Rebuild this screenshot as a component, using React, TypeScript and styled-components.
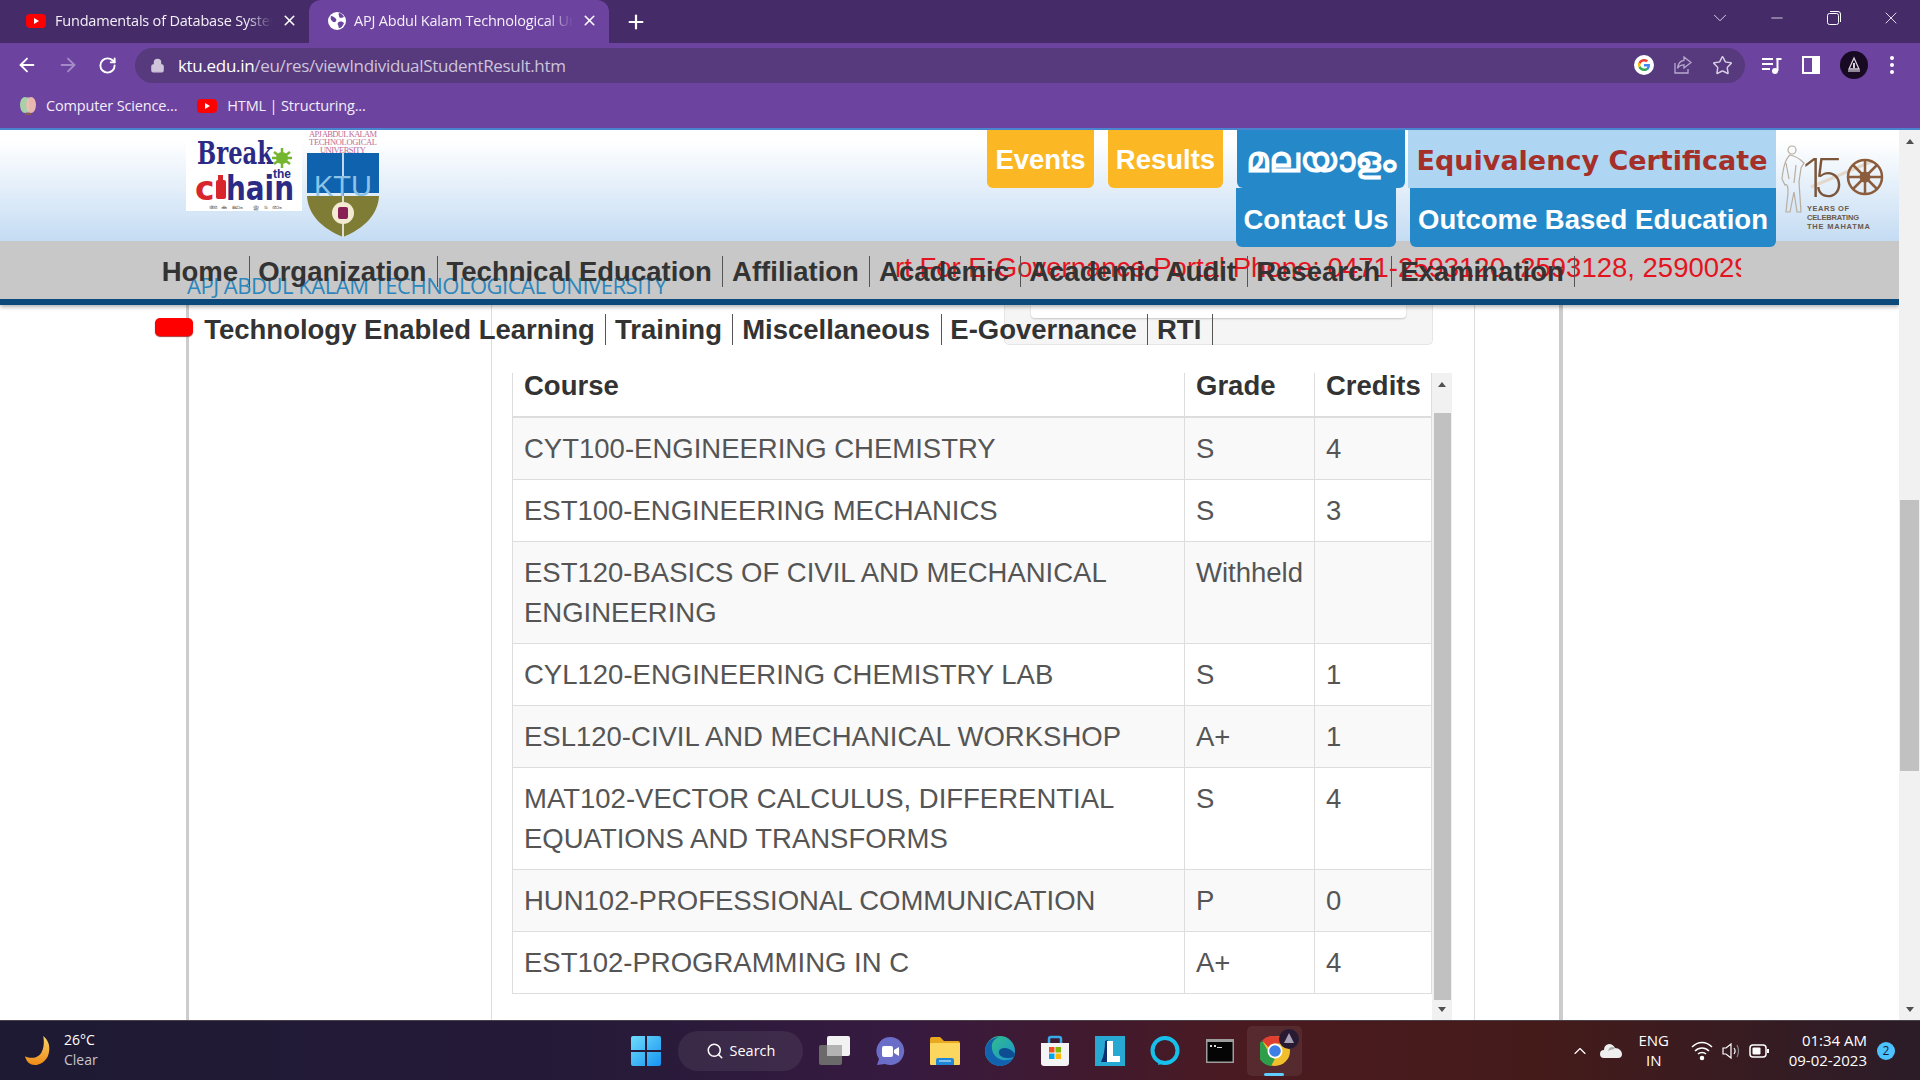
import React from 'react';
import styled, { createGlobalStyle } from 'styled-components';
import { ArrowLeft, ArrowRight, RotateCw, Lock, X, Plus, Star, ChevronDown, ChevronUp, Minus, Search } from 'lucide-react';

const GlobalStyle = createGlobalStyle`
    html, body { margin: 0; padding: 0; overflow: hidden; background: #fff; }
    * { box-sizing: border-box; }
`;

const ui = `"Open Sans", "Noto Sans", sans-serif`;
const web = `"Liberation Sans", Arial, sans-serif`;

const firstNavRow = ['Home', 'Organization', 'Technical Education', 'Affiliation', 'Academic', 'Academic Audit', 'Research', 'Examination'];
const secondNavRow = ['Technology Enabled Learning', 'Training', 'Miscellaneous', 'E-Governance', 'RTI'];

const results = [
    { course: 'CYT100-ENGINEERING CHEMISTRY', grade: 'S', credits: '4' },
    { course: 'EST100-ENGINEERING MECHANICS', grade: 'S', credits: '3' },
    { course: 'EST120-BASICS OF CIVIL AND MECHANICAL ENGINEERING', grade: 'Withheld', credits: '' },
    { course: 'CYL120-ENGINEERING CHEMISTRY LAB', grade: 'S', credits: '1' },
    { course: 'ESL120-CIVIL AND MECHANICAL WORKSHOP', grade: 'A+', credits: '1' },
    { course: 'MAT102-VECTOR CALCULUS, DIFFERENTIAL EQUATIONS AND TRANSFORMS', grade: 'S', credits: '4' },
    { course: 'HUN102-PROFESSIONAL COMMUNICATION', grade: 'P', credits: '0' },
    { course: 'EST102-PROGRAMMING IN C', grade: 'A+', credits: '4' },
];

const YoutubeIcon = () => (
    <svg width="20" height="20" viewBox="0 0 20 20">
        <rect x="0" y="3" width="20" height="14" rx="4" fill="#f00" />
        <path d="M8 7l5 3-5 3z" fill="#fff" />
    </svg>
);

const GlobeIcon = () => (
    <svg width="18" height="18" viewBox="0 0 18 18">
        <circle cx="9" cy="9" r="9" fill="#fff" />
        <path d="M3 4c2 0 3 1 4 2s2 1 1 3-3 1-4 0-2-3-1-5zM11 1c2 0 4 2 5 4l-3 1c-1 0-2-1-2-2s-1-2 0-3zM11 10c2-1 4 0 5 1-1 3-3 5-5 5-1-1 0-2-1-3s0-3 1-3z" fill="#6d43a0" />
    </svg>
);

const GoogleIcon = () => (
    <svg width="20" height="20" viewBox="0 0 20 20">
        <circle cx="10" cy="10" r="10" fill="#fff" />
        <path d="M16 10.2c0-.5 0-.9-.1-1.3H10v2.5h3.4c-.2.8-.6 1.400-1.300 1.900l2 1.500c1.200-1.100 1.900-2.700 1.900-4.600z" fill="#4285f4" />
        <path d="M10 16c1.700 0 3-.5 4.100-1.600l-2-1.500c-.5.400-1.200.600-2.100.600-1.600 0-3-1.100-3.500-2.500l-2 1.600C5.500 14.600 7.600 16 10 16z" fill="#34a853" />
        <path d="M6.500 11c-.3-.7-.3-1.400 0-2.100L4.500 7.300c-.8 1.700-.8 3.600 0 5.300z" fill="#fbbc05" />
        <path d="M10 6.400c.9 0 1.700.3 2.300.9l1.800-1.800C13 4.500 11.600 4 10 4 7.600 4 5.500 5.400 4.500 7.300l2 1.600C7 7.500 8.400 6.400 10 6.400z" fill="#ea4335" />
    </svg>
);

const ShareIcon = () => (
    <svg width="20" height="20" viewBox="0 0 20 20" fill="none" stroke="#b9a9cf" strokeWidth="1.300">
        <path d="M2 8v10h13v-4" />
        <path d="M11 2l7 5.500-7 5.500v-3.200c-3 0-5 1-6.500 3.500C5 9 7.500 5.800 11 5.300z" />
    </svg>
);

const MediaIcon = () => (
    <svg width="20" height="20" viewBox="0 0 20 20" fill="#fff">
        <rect x="0" y="3" width="11" height="2" />
        <rect x="0" y="8" width="11" height="2" />
        <rect x="0" y="13" width="8" height="2" />
        <circle cx="13" cy="16" r="3" />
        <rect x="14.500" y="3" width="2" height="13" />
        <rect x="14.500" y="3" width="5" height="2" />
    </svg>
);

const SidePanelIcon = () => (
    <svg width="18" height="18" viewBox="0 0 18 18">
        <path d="M0 0h18v18H0z" fill="#fff" />
        <path d="M2 2h8v14H2z" fill="#6d43a0" />
    </svg>
);

const ProfileIcon = () => (
    <svg width="28" height="28" viewBox="0 0 28 28">
        <circle cx="14" cy="14" r="14" fill="#170a22" />
        <path d="M14 7l5 11H9z" fill="none" stroke="#d8d3de" strokeWidth="1.300" />
        <path d="M13 12h2v5h-2z" fill="#d8d3de" />
        <path d="M8 20h12" stroke="#b8b0c0" strokeWidth="1.500" />
    </svg>
);

const BrainIcon = () => (
    <svg width="16" height="20" viewBox="0 0 16 20">
        <ellipse cx="5" cy="9" rx="5" ry="8" fill="#a7d2a8" />
        <ellipse cx="11" cy="9" rx="5" ry="8" fill="#eab7b0" />
        <path d="M8 1v16" stroke="#d8d2b8" />
        <path d="M5 18h6" stroke="#8a5a52" strokeWidth="2" />
    </svg>
);

const BreakTheChainLogo = () => (
    <svg width="116" height="81" viewBox="0 0 116 81">
        <rect width="116" height="81" fill="#fff" />
        <text x="11" y="34" fontFamily="DejaVu Serif Condensed, DejaVu Sans Condensed, serif" fontWeight="700" fontSize="31" fill="#2b2b85" textLength="76" lengthAdjust="spacingAndGlyphs">Break</text>
        <g fill="#74b62e">
            <circle cx="96" cy="28" r="6" />
            <path d="M88 22l16 12M104 22L88 34M96 18v20M86 28h20" stroke="#74b62e" strokeWidth="2.500" />
        </g>
        <text x="87" y="48" fontFamily="Liberation Sans, sans-serif" fontWeight="700" fontSize="12" fill="#2b2b85">the</text>
        <text x="9" y="70" fontFamily="DejaVu Sans, sans-serif" fontWeight="700" fontSize="33" fill="#d9262c">c</text>
        <rect x="30" y="50" width="10" height="19" rx="2" fill="#d9262c" />
        <rect x="32" y="45" width="5" height="6" fill="#d9262c" />
        <text x="40" y="70" fontFamily="DejaVu Sans Condensed, sans-serif" fontWeight="700" fontSize="33" fill="#2b2b85" textLength="68" lengthAdjust="spacingAndGlyphs">hain</text>
        <text x="23" y="79" fontFamily="Liberation Sans, sans-serif" fontSize="6" fill="#555" textLength="73">അകലാം തുടരാം</text>
    </svg>
);

const KtuLogo = () => (
    <svg width="72" height="108" viewBox="0 0 72 108">
        <g fontFamily="Liberation Serif, serif" fontSize="8.500" fill="#c36c95" textAnchor="middle">
            <text x="36" y="7" textLength="68">APJ ABDUL KALAM</text>
            <text x="36" y="15" textLength="68">TECHNOLOGICAL</text>
            <text x="36" y="23" textLength="46">UNIVERSITY</text>
        </g>
        <rect x="0" y="23" width="72" height="40" fill="#0f62ad" />
        <path d="M0 66h72c-1 18-14 32-36 41C14 98 1 84 0 66z" fill="#7f7c35" />
        <path d="M36 23v24M36 66v41" stroke="#fff" strokeWidth="1.500" />
        <path d="M36 47v19" stroke="#c0344e" strokeWidth="1.500" />
        <circle cx="36" cy="83" r="11" fill="#f3ead2" />
        <rect x="31" y="77" width="10" height="12" rx="2" fill="#8a1f56" />
        <text x="36" y="66" textAnchor="middle" fontFamily="Liberation Sans, sans-serif" fontSize="29" fill="#8cc3e6" textLength="58" lengthAdjust="spacingAndGlyphs">KTU</text>
    </svg>
);

const GandhiLogo = () => (
    <svg width="104" height="90" viewBox="0 0 104 90">
        <path d="M30 44L92 18" stroke="#e2d8cc" strokeWidth="3" />
        <g fill="none" stroke="#b9ada0" strokeWidth="1.200">
            <circle cx="11" cy="7" r="4" />
            <path d="M9 12C4 16 2 26 1 36l3 6c3-2 3 4 3 8L5 69h4l4-20 3 20h4l-2-30 2-14 3-5c-4-4-8-7-14-8z" />
            <path d="M5 20l3 16M15 22l-2 18" />
        </g>
        <text x="21" y="54" fontFamily="Inter, Lato, sans-serif" fontWeight="200" fontSize="54" fill="#7a553a" textLength="42">15</text>
        <g stroke="#8c5d3c" fill="none">
            <circle cx="84" cy="34" r="17" strokeWidth="2.500" />
            <circle cx="84" cy="34" r="4" strokeWidth="3" />
            <path d="M84 17v34M67 34h34M72 22l24 24M96 22L72 46" strokeWidth="2.500" />
        </g>
        <g fontFamily="Liberation Sans, sans-serif" fontWeight="700" fontSize="7.500" fill="#6b5a4b">
            <text x="26" y="68" textLength="42">YEARS OF</text>
            <text x="26" y="77" textLength="52">CELEBRATING</text>
            <text x="26" y="86" textLength="63">THE MAHATMA</text>
        </g>
    </svg>
);

const MoonIcon = () => (
    <svg width="32" height="32" viewBox="0 0 30 30">
        <defs>
            <linearGradient id="moon" x1="0" y1="0" x2="0" y2="1">
                <stop offset="0" stopColor="#f7d66a" />
                <stop offset="1" stopColor="#ef8a17" />
            </linearGradient>
        </defs>
        <path d="M18 1c5 4 7 10 5 17-2 7-9 11-15 10-4-1-6-4-7-8 6 3 12 1 15-3 3-5 3-11 2-16z" fill="url(#moon)" />
    </svg>
);

const WindowsIcon = () => (
    <svg width="30" height="30" viewBox="0 0 30 30">
        <defs>
            <linearGradient id="win" x1="0" y1="0" x2="1" y2="1">
                <stop offset="0" stopColor="#6fdcfb" />
                <stop offset="1" stopColor="#1593f2" />
            </linearGradient>
        </defs>
        <path d="M0 2a2 2 0 0 1 2-2h12v14H0zM16 0h12a2 2 0 0 1 2 2v12H16zM0 16h14v14H2a2 2 0 0 1-2-2zM16 16h14v12a2 2 0 0 1-2 2H16z" fill="url(#win)" />
    </svg>
);

const TaskViewIcon = () => (
    <svg width="32" height="30" viewBox="0 0 32 30">
        <rect x="0" y="9" width="23" height="20" rx="2" fill="#6a6a6a" />
        <rect x="8" y="0" width="23" height="20" rx="2" fill="#f2f2f2" />
        <rect x="8" y="9" width="15" height="11" fill="#b3b3b3" />
    </svg>
);

const MeetIcon = () => (
    <svg width="30" height="30" viewBox="0 0 30 30">
        <path d="M15 1a14 14 0 1 1-5 27l-8 1 2-6A14 14 0 0 1 15 1z" fill="#6a6ec9" />
        <rect x="7" y="10" width="11" height="11" rx="2" fill="#fff" />
        <path d="M19 14l5-3v9l-5-3z" fill="#fff" />
    </svg>
);

const ExplorerIcon = () => (
    <svg width="30" height="28" viewBox="0 0 30 28">
        <path d="M0 2a2 2 0 0 1 2-2h8l4 4h14a2 2 0 0 1 2 2v4H0z" fill="#e8a91e" />
        <rect x="0" y="6" width="30" height="22" rx="1" fill="#fcd75f" />
        <path d="M6 28v-5a2 2 0 0 1 2-2h14a2 2 0 0 1 2 2v5z" fill="#1f86d8" />
        <rect x="9" y="23" width="12" height="2" fill="#7ec2f2" />
    </svg>
);

const EdgeIcon = () => (
    <svg width="30" height="30" viewBox="0 0 30 30">
        <defs>
            <linearGradient id="edge" x1="0" y1="0" x2="1" y2="1">
                <stop offset="0" stopColor="#33c481" />
                <stop offset="1" stopColor="#1a8fd8" />
            </linearGradient>
        </defs>
        <circle cx="15" cy="15" r="15" fill="url(#edge)" />
        <path d="M0 15C0 7 7 1 15 1c-6 1-9 6-8 12 1 7 7 12 15 11 3 0 5-1 6-2-3 5-8 8-13 8C7 30 0 23 0 15z" fill="#1362b0" />
        <path d="M14 15c1-3 6-4 10-2s6 4 6 7c-3 2-5 2-8 2-5 0-9-3-8-7z" fill="#0d4d92" />
    </svg>
);

const StoreIcon = () => (
    <svg width="30" height="32" viewBox="0 0 30 32">
        <path d="M9 8V4a2 2 0 0 1 2-2h8a2 2 0 0 1 2 2v4" fill="none" stroke="#38a9e8" strokeWidth="2.500" />
        <path d="M1 8h28v20a3 3 0 0 1-3 3H4a3 3 0 0 1-3-3z" fill="#f4f4f4" />
        <rect x="9" y="12" width="5.500" height="5.500" fill="#f25022" />
        <rect x="15.500" y="12" width="5.500" height="5.500" fill="#7fba00" />
        <rect x="9" y="18.500" width="5.500" height="5.500" fill="#00a4ef" />
        <rect x="15.500" y="18.500" width="5.500" height="5.500" fill="#ffb900" />
    </svg>
);

const LauncherIcon = () => (
    <svg width="30" height="30" viewBox="0 0 30 30">
        <rect width="30" height="30" fill="#27a9d3" />
        <path d="M6 26c3-6 4-14 4-21l3-1v22z" fill="#0d2f70" />
        <path d="M12 5h6v15h7v6H12z" fill="#fff" />
    </svg>
);

const AlexaIcon = () => (
    <svg width="30" height="30" viewBox="0 0 30 30">
        <circle cx="15" cy="14.500" r="12.500" fill="none" stroke="#17c0ea" strokeWidth="4" />
        <path d="M9 24l-1 5 7-2z" fill="#17c0ea" />
    </svg>
);

const TerminalIcon = () => (
    <svg width="28" height="24" viewBox="0 0 28 24">
        <rect width="28" height="24" fill="#9d9d9d" />
        <rect x="1.500" y="3" width="25" height="19.500" fill="#050505" />
        <path d="M4 6h2v2H4zM8 6h2v2H8zM11 8h5v1h-5z" fill="#ddd" />
    </svg>
);

const ChromeIcon = () => (
    <svg width="30" height="30" viewBox="0 0 30 30">
        <circle cx="15" cy="15" r="15" fill="#f1bf2c" />
        <path d="M15 0a15 15 0 0 1 13 7.500H15a7.500 7.500 0 0 0-6.500 3.800L2 4.500A15 15 0 0 1 15 0z" fill="#e0402f" />
        <path d="M2 4.500l6.500 11.300a7.500 7.500 0 0 0 6.500 7L11 30A15 15 0 0 1 2 4.500z" fill="#2f9e4a" />
        <circle cx="15" cy="15" r="7.500" fill="#fff" />
        <circle cx="15" cy="15" r="5.800" fill="#3d7fe4" />
    </svg>
);

const ChromeBadge = () => (
    <svg width="20" height="20" viewBox="0 0 20 20">
        <circle cx="10" cy="10" r="10" fill="#281a33" />
        <path d="M10 4l5 10H5z" fill="#a79fb3" />
    </svg>
);

const CloudIcon = () => (
    <svg width="22" height="18" viewBox="0 0 22 18">
        <path d="M4 16a4 4 0 0 1 0-8 6 6 0 0 1 5-6c3 0 5 2 6 4 4 0 7 3 7 6a4 4 0 0 1-4 4z" fill="#eee" />
        <path d="M8 9c3-2 6-1 7-3-3-2-6-1-7 3z" fill="#aaa" />
    </svg>
);

const WifiIcon = () => (
    <svg width="22" height="20" viewBox="0 0 22 20" fill="none" stroke="#fff" strokeWidth="1.500">
        <path d="M1 6c6-6 14-6 20 0M4 10c4-4 10-4 14 0M7 13c2-2 6-2 8 0" />
        <circle cx="11" cy="17" r="1.500" fill="#fff" />
    </svg>
);

const SpeakerIcon = () => (
    <svg width="20" height="20" viewBox="0 0 20 20" fill="none" stroke="#fff" strokeWidth="1.200">
        <path d="M2 7h3l5-4v14l-5-4H2z" />
        <path d="M13 7c1.500 2 1.500 4 0 6" />
        <path d="M16 4c2 4 2 8 0 12" stroke="#888" />
    </svg>
);

const BatteryIcon = () => (
    <svg width="20" height="14" viewBox="0 0 20 14">
        <rect x="1" y="1" width="16" height="12" rx="3" fill="none" stroke="#fff" strokeWidth="1.500" />
        <rect x="3.500" y="3.500" width="8" height="7" rx="1" fill="#fff" />
        <rect x="18" y="5" width="2" height="4" fill="#fff" />
    </svg>
);

const App = () => (
    <Screen>
        <GlobalStyle />
        <TabStrip>
            <Tab>
                <TabIcon><YoutubeIcon /></TabIcon>
                <TabTitle>Fundamentals of Database Systems</TabTitle>
                <X size={17} color="#fff" strokeWidth={2.2} />
            </Tab>
            <Tab $active>
                <TabIcon><GlobeIcon /></TabIcon>
                <TabTitle>APJ Abdul Kalam Technological University</TabTitle>
                <X size={17} color="#fff" strokeWidth={2.2} />
            </Tab>
            <NewTab><Plus size={22} color="#fff" strokeWidth={2.4} /></NewTab>
            <WindowControls>
                <ChevronDown size={22} color="#e8e0f0" strokeWidth={1} />
                <Minus size={18} color="#fff" strokeWidth={1} />
                <svg width="16" height="16" viewBox="0 0 16 16" fill="none" stroke="#fff">
                    <rect x="1.500" y="3.500" width="11" height="11" rx="2" />
                    <path d="M4 1.500h8a2.500 2.500 0 0 1 2.500 2.500v8" />
                </svg>
                <X size={20} color="#fff" strokeWidth={1} />
            </WindowControls>
        </TabStrip>
        <Toolbar>
            <NavButtons>
                <ArrowLeft size={22} color="#fff" />
                <ArrowRight size={22} color="#a58bc6" />
                <RotateCw size={19} color="#fff" strokeWidth={2.4} />
            </NavButtons>
            <AddressBar>
                <Lock size={15} color="#cfc6dc" fill="#cfc6dc" />
                <Url><strong>ktu.edu.in</strong>/eu/res/viewIndividualStudentResult.htm</Url>
                <AddressIcons>
                    <GoogleIcon />
                    <ShareIcon />
                    <Star size={21} color="#d8cfe4" strokeWidth={1.7} />
                </AddressIcons>
            </AddressBar>
            <ToolbarIcons>
                <MediaIcon />
                <SidePanelIcon />
                <ProfileIcon />
                <Dots><i /><i /><i /></Dots>
            </ToolbarIcons>
        </Toolbar>
        <Bookmarks>
            <Bookmark><BrainIcon />Computer Science...</Bookmark>
            <Bookmark><YoutubeIcon />HTML | Structuring...</Bookmark>
        </Bookmarks>
        <Viewport>
            <Page>
                <Header>
                    <Logos>
                        <BreakTheChainLogo />
                        <KtuLogo />
                    </Logos>
                    <HeaderLinks>
                        <LinkRow>
                            <HeaderLink $tone="amber" $w={107}>Events</HeaderLink>
                            <HeaderLink $tone="amber" $w={115}>Results</HeaderLink>
                            <MalayalamLink $tone="blue" $w={168}>മലയാളം</MalayalamLink>
                            <EquivalencyLink>Equivalency Certificate</EquivalencyLink>
                        </LinkRow>
                        <LinkRow>
                            <HeaderLink $tone="blue" $w={160}>Contact Us</HeaderLink>
                            <HeaderLink $tone="blue" $w={366}>Outcome Based Education</HeaderLink>
                        </LinkRow>
                    </HeaderLinks>
                    <AnniversaryLogo><GandhiLogo /></AnniversaryLogo>
                </Header>
                <Nav>
                    <UniversityName>APJ ABDUL KALAM TECHNOLOGICAL UNIVERSITY</UniversityName>
                    <Marquee>rt For E-Governance Portal Phone: 0471-2593120, 2593128, 2590029</Marquee>
                    <NavRow>
                        {firstNavRow.map(item => <NavItem key={item}>{item}</NavItem>)}
                    </NavRow>
                    <NavRow $second>
                        <RedPill />
                        {secondNavRow.map(item => <NavItem key={item}>{item}</NavItem>)}
                    </NavRow>
                </Nav>
                <Card>
                    <Column>
                        <NoticePanel><NoticeBox /></NoticePanel>
                        <TableScroller>
                            <ResultTable>
                                <colgroup>
                                    <col style={{ width: 672 }} />
                                    <col style={{ width: 130 }} />
                                    <col style={{ width: 117 }} />
                                </colgroup>
                                <thead>
                                    <tr>
                                        <th>Course</th>
                                        <th>Grade</th>
                                        <th>Credits</th>
                                    </tr>
                                </thead>
                                <tbody>
                                    {results.map(row => (
                                        <tr key={row.course}>
                                            <td>{row.course}</td>
                                            <td>{row.grade}</td>
                                            <td>{row.credits}</td>
                                        </tr>
                                    ))}
                                </tbody>
                            </ResultTable>
                            <ScrollTrack $inner>
                                <ScrollArrow $up />
                                <ScrollThumb $top={40} $height={587} $inner />
                                <ScrollArrow />
                            </ScrollTrack>
                        </TableScroller>
                    </Column>
                </Card>
            </Page>
            <ScrollTrack>
                <ScrollArrow $up />
                <ScrollThumb $top={370} $height={271} />
                <ScrollArrow />
            </ScrollTrack>
        </Viewport>
        <Taskbar>
            <Weather>
                <MoonIcon />
                <WeatherText>
                    <span>26°C</span>
                    <small>Clear</small>
                </WeatherText>
            </Weather>
            <TaskCentre>
                <WindowsIcon />
                <SearchPill><Search size={18} color="#fff" />Search</SearchPill>
                <TaskIcons>
                    <TaskIcon><TaskViewIcon /></TaskIcon>
                    <TaskIcon><MeetIcon /></TaskIcon>
                    <TaskIcon><ExplorerIcon /></TaskIcon>
                    <TaskIcon><EdgeIcon /></TaskIcon>
                    <TaskIcon><StoreIcon /></TaskIcon>
                    <TaskIcon><LauncherIcon /></TaskIcon>
                    <TaskIcon><AlexaIcon /></TaskIcon>
                    <TaskIcon><TerminalIcon /></TaskIcon>
                    <TaskIcon $active>
                        <ChromeIcon />
                        <BadgeSlot><ChromeBadge /></BadgeSlot>
                    </TaskIcon>
                </TaskIcons>
            </TaskCentre>
            <Tray>
                <ChevronUp size={20} color="#fff" strokeWidth={1.4} />
                <CloudIcon />
                <TrayText><span>ENG</span><span>IN</span></TrayText>
                <TrayIcons>
                    <WifiIcon />
                    <SpeakerIcon />
                    <BatteryIcon />
                </TrayIcons>
                <Clock><span>01:34 AM</span><span>09-02-2023</span></Clock>
                <Badge>2</Badge>
            </Tray>
        </Taskbar>
    </Screen>
);

export default App;

const Screen = styled.div`
    width: 1920px;
    height: 1080px;
    display: flex;
    flex-direction: column;
    overflow: hidden;
    font-family: ${web};
`;

const TabStrip = styled.div`
    height: 43px;
    flex: none;
    display: flex;
    background: #452c69;
`;

const Tab = styled.div<{ $active?: boolean }>`
    width: ${p => (p.$active ? 300 : 309)}px;
    height: 43px;
    display: flex;
    align-items: center;
    gap: ${p => (p.$active ? 8 : 9)}px;
    padding: 0 11px 2px ${p => (p.$active ? 19 : 26)}px;
    border-radius: 12px 12px 0 0;
    background: ${p => (p.$active ? '#6d43a0' : 'transparent')};
`;

const TabIcon = styled.span`
    display: flex;
    flex: none;
`;

const TabTitle = styled.span`
    flex: 1;
    min-width: 0;
    overflow: hidden;
    white-space: nowrap;
    font: 14.5px ${ui};
    letter-spacing: -0.2px;
    color: #f4eff8;
    mask-image: linear-gradient(to right, #000 88%, transparent 100%);
`;

const NewTab = styled.div`
    margin-left: 16px;
    display: flex;
    align-items: center;
`;

const WindowControls = styled.div`
    margin-left: auto;
    width: 257px;
    display: grid;
    grid-template-columns: repeat(4, 57px);
    justify-items: center;
    align-items: center;
    padding: 0 0 7px 28px;
`;

const Toolbar = styled.div`
    height: 44px;
    flex: none;
    display: flex;
    align-items: center;
    background: #6d43a0;
`;

const NavButtons = styled.div`
    width: 135px;
    flex: none;
    display: flex;
    align-items: center;
    gap: 19px;
    padding-left: 16px;
`;

const AddressBar = styled.div`
    width: 1610px;
    height: 35px;
    flex: none;
    display: flex;
    align-items: center;
    padding: 0 0 0 15px;
    border-radius: 18px;
    background: #563a7d;
`;

const Url = styled.div`
    margin-left: 13px;
    font: 17px ${ui};
    letter-spacing: -0.32px;
    color: #cdc4da;

    strong {
        font-weight: 400;
        color: #fff;
    }
`;

const AddressIcons = styled.div`
    margin-left: auto;
    display: flex;
    align-items: center;
    gap: 19px;
    padding-right: 12px;
`;

const ToolbarIcons = styled.div`
    display: flex;
    align-items: center;
    padding-left: 17px;
    gap: 20px;
`;

const Dots = styled.div`
    display: flex;
    flex-direction: column;
    gap: 3px;
    margin-left: 2px;

    i {
        width: 4px;
        height: 4px;
        border-radius: 50%;
        background: #fff;
    }
`;

const Bookmarks = styled.div`
    height: 41px;
    flex: none;
    display: flex;
    align-items: center;
    gap: 20px;
    padding: 0 0 4px 20px;
    background: #6d43a0;
`;

const Bookmark = styled.div`
    display: flex;
    align-items: center;
    gap: 10px;
    font: 14.5px ${ui};
    letter-spacing: -0.15px;
    color: #f3eef8;
`;

const Viewport = styled.div`
    flex: 1;
    min-height: 0;
    display: flex;
    border-top: 2px solid #4a84cf;
`;

const Page = styled.div`
    flex: 1;
    min-width: 0;
    display: flex;
    flex-direction: column;
    overflow: hidden;
    background: #fff;
`;

const Header = styled.div`
    height: 111px;
    flex: none;
    display: flex;
    padding-left: 186px;
    background: linear-gradient(to bottom, #ffffff 10%, #c4dcf3 100%);
    position: relative;
    z-index: 2;
`;

const Logos = styled.div`
    display: flex;
    align-items: flex-start;
    gap: 5px;
`;

const HeaderLinks = styled.div`
    margin-left: auto;
    display: flex;
    flex-direction: column;
    align-items: flex-end;
`;

const LinkRow = styled.div`
    display: flex;
    gap: 14px;

    & + & a {
        height: 59px;
        padding-top: 4px;
    }
`;

const HeaderLink = styled.a<{ $tone: 'amber' | 'blue'; $w: number }>`
    width: ${p => p.$w}px;
    height: 58px;
    display: flex;
    align-items: center;
    justify-content: center;
    padding-top: 2px;
    border-radius: 0 0 6px 6px;
    background: ${p => (p.$tone === 'amber' ? '#fcb725' : '#2589c9')};
    font: 700 27.5px ${web};
    color: #fff;
`;

const MalayalamLink = styled(HeaderLink)`
    margin-right: -11px;
    font-size: 36px;
`;

const EquivalencyLink = styled.a`
    width: 368px;
    height: 58px;
    display: flex;
    align-items: center;
    justify-content: center;
    padding-top: 2px;
    background: #aed5f1;
    font: 700 27px "DejaVu Sans", sans-serif;
    color: #a5302a;
`;

const AnniversaryLogo = styled.div`
    width: 123px;
    flex: none;
    padding: 13px 0 0 5px;
`;

const Nav = styled.nav`
    height: 64px;
    flex: none;
    position: relative;
    z-index: 1;
    padding: 15px 0 0 152px;
    background: #c8c8c8;
    border-bottom: 6px solid #0d4a7c;
    box-shadow: 0 2px 4px rgba(0, 0, 0, 0.3);
`;

const UniversityName = styled.div`
    position: absolute;
    left: 187px;
    top: 29px;
    white-space: nowrap;
    font: 22px "Open Sans", sans-serif;
    letter-spacing: -0.48px;
    color: #2a86bd;
`;

const Marquee = styled.div`
    position: absolute;
    left: 895px;
    top: 11px;
    width: 846px;
    overflow: hidden;
    white-space: nowrap;
    font: 27.5px ${web};
    color: #e3141f;
`;

const NavRow = styled.div<{ $second?: boolean }>`
    position: relative;
    display: flex;
    align-items: center;
    height: 31px;
    margin: ${p => (p.$second ? '27px 0 0 3px' : '0 0 0 1px')};
`;

const NavItem = styled.a`
    height: 31px;
    padding: 0 10.5px 0 8.7px;
    display: flex;
    align-items: center;
    border-right: 1px solid #555;
    white-space: nowrap;
    font: 700 27.5px ${web};
    color: #333;
`;

const RedPill = styled.span`
    width: 38px;
    height: 18px;
    margin: -6px 2.5px 0 0;
    border-radius: 5px;
    background: #f00;
    box-shadow: 0 1px 1px #a33;
`;

const Card = styled.div`
    flex: 1;
    min-height: 0;
    width: 1377px;
    margin-left: 186px;
    padding-left: 302px;
    border-left: 3px solid #ccc;
    border-right: 4px solid #ccc;
`;

const Column = styled.div`
    width: 984px;
    height: 100%;
    display: flex;
    flex-direction: column;
    padding-left: 20px;
    border-left: 1px solid #ddd;
    border-right: 1px solid #ddd;
`;

const NoticePanel = styled.div`
    width: 429px;
    height: 40px;
    flex: none;
    align-self: flex-end;
    margin: 0 41px 28px 0;
    padding: 0 26px;
    border: 1px solid #e6e6e6;
    border-top: 0;
    border-radius: 0 0 5px 5px;
    background: #f5f5f5;
`;

const NoticeBox = styled.div`
    height: 13px;
    border-radius: 0 0 4px 4px;
    background: #fff;
    box-shadow: 0 1px 2px rgba(0, 0, 0, 0.2);
`;

const TableScroller = styled.div`
    flex: 1;
    min-height: 0;
    display: flex;
    align-items: flex-start;
    width: 940px;
`;

const ResultTable = styled.table`
    width: 919px;
    flex: none;
    table-layout: fixed;
    border-collapse: collapse;
    font: 27.5px/40px ${web};
    color: #555;

    th {
        height: 43px;
        padding: 0 11px 17px;
        line-height: 26px;
        text-align: left;
        font-weight: 700;
        color: #333;
        border: 1px solid #ddd;
        border-top: 0;
        border-bottom: 2px solid #ddd;
    }

    td {
        padding: 10.5px 11px;
        vertical-align: top;
        border: 1px solid #ddd;
    }

    tbody tr:nth-child(odd) td {
        background: #f9f9f9;
    }
`;

const ScrollTrack = styled.div<{ $inner?: boolean }>`
    width: ${p => (p.$inner ? 20 : 21)}px;
    flex: none;
    height: ${p => (p.$inner ? '647px' : 'auto')};
    display: flex;
    flex-direction: column;
    background: #f1f1f1;
    position: relative;
`;

const ScrollArrow = styled.div<{ $up?: boolean }>`
    position: absolute;
    left: 50%;
    margin-left: -4px;
    width: 0;
    height: 0;
    border-left: 4.5px solid transparent;
    border-right: 4.5px solid transparent;
    ${p => (p.$up
        ? 'top: 9px; border-bottom: 5px solid #505050;'
        : 'bottom: 8px; border-top: 5px solid #505050;')}
`;

const ScrollThumb = styled.div<{ $top: number; $height: number; $inner?: boolean }>`
    margin: ${p => p.$top}px 1px 0 ${p => (p.$inner ? 2 : 1)}px;
    height: ${p => p.$height}px;
    background: #c1c1c1;
`;

const Taskbar = styled.div`
    height: 60px;
    flex: none;
    display: flex;
    align-items: center;
    border-top: 1px solid #4a4048;
    background: linear-gradient(to right, #1e1a33 0%, #251a38 30%, #371a40 47%, #4a1a20 65%, #451b1a 80%, #2b1c28 100%);
    color: #fff;
`;

const Weather = styled.div`
    width: 631px;
    flex: none;
    display: flex;
    align-items: center;
    gap: 8px;
    padding-left: 24px;
`;

const WeatherText = styled.div`
    display: flex;
    flex-direction: column;
    padding-bottom: 2px;
    font: 14px/20px ${ui};

    small {
        font-size: 14px;
        color: #c8c5cc;
    }
`;

const TaskCentre = styled.div`
    display: flex;
    align-items: center;
`;

const SearchPill = styled.div`
    width: 125px;
    height: 40px;
    margin-left: 17px;
    display: flex;
    align-items: center;
    justify-content: center;
    gap: 6px;
    border-radius: 20px;
    background: rgba(255, 255, 255, 0.07);
    font: 14.5px ${ui};
`;

const TaskIcons = styled.div`
    display: flex;
    margin-left: 4px;
`;

const TaskIcon = styled.div<{ $active?: boolean }>`
    width: 55px;
    height: 50px;
    display: flex;
    align-items: center;
    justify-content: center;
    position: relative;
    border-radius: 5px;
    background: ${p => (p.$active ? 'rgba(255, 255, 255, 0.07)' : 'transparent')};

    ${p => p.$active && `
        &::after {
            content: '';
            position: absolute;
            left: 17px;
            bottom: 0;
            width: 20px;
            height: 3px;
            border-radius: 2px;
            background: #60cdff;
        }
    `}
`;

const BadgeSlot = styled.span`
    position: absolute;
    top: 3px;
    right: 3px;
    display: flex;
`;

const Tray = styled.div`
    margin-left: auto;
    display: flex;
    align-items: center;
    padding-right: 25px;

    > svg:nth-child(2) {
        margin-left: 10px;
    }
`;

const TrayText = styled.div`
    width: 40px;
    margin-left: 12px;
    display: flex;
    flex-direction: column;
    align-items: center;
    padding-bottom: 2px;
    font: 15px/20px ${ui};
`;

const TrayIcons = styled.div`
    display: flex;
    align-items: center;
    gap: 8px;
    margin-left: 17px;
`;

const Clock = styled.div`
    margin-left: 20px;
    display: flex;
    flex-direction: column;
    align-items: flex-end;
    padding-bottom: 2px;
    font: 15px/20px ${ui};
`;

const Badge = styled.div`
    width: 18px;
    height: 18px;
    margin-left: 10px;
    border-radius: 50%;
    background: #4cc2ff;
    color: #1a1a2a;
    font: 12px/18px ${ui};
    text-align: center;
`;
